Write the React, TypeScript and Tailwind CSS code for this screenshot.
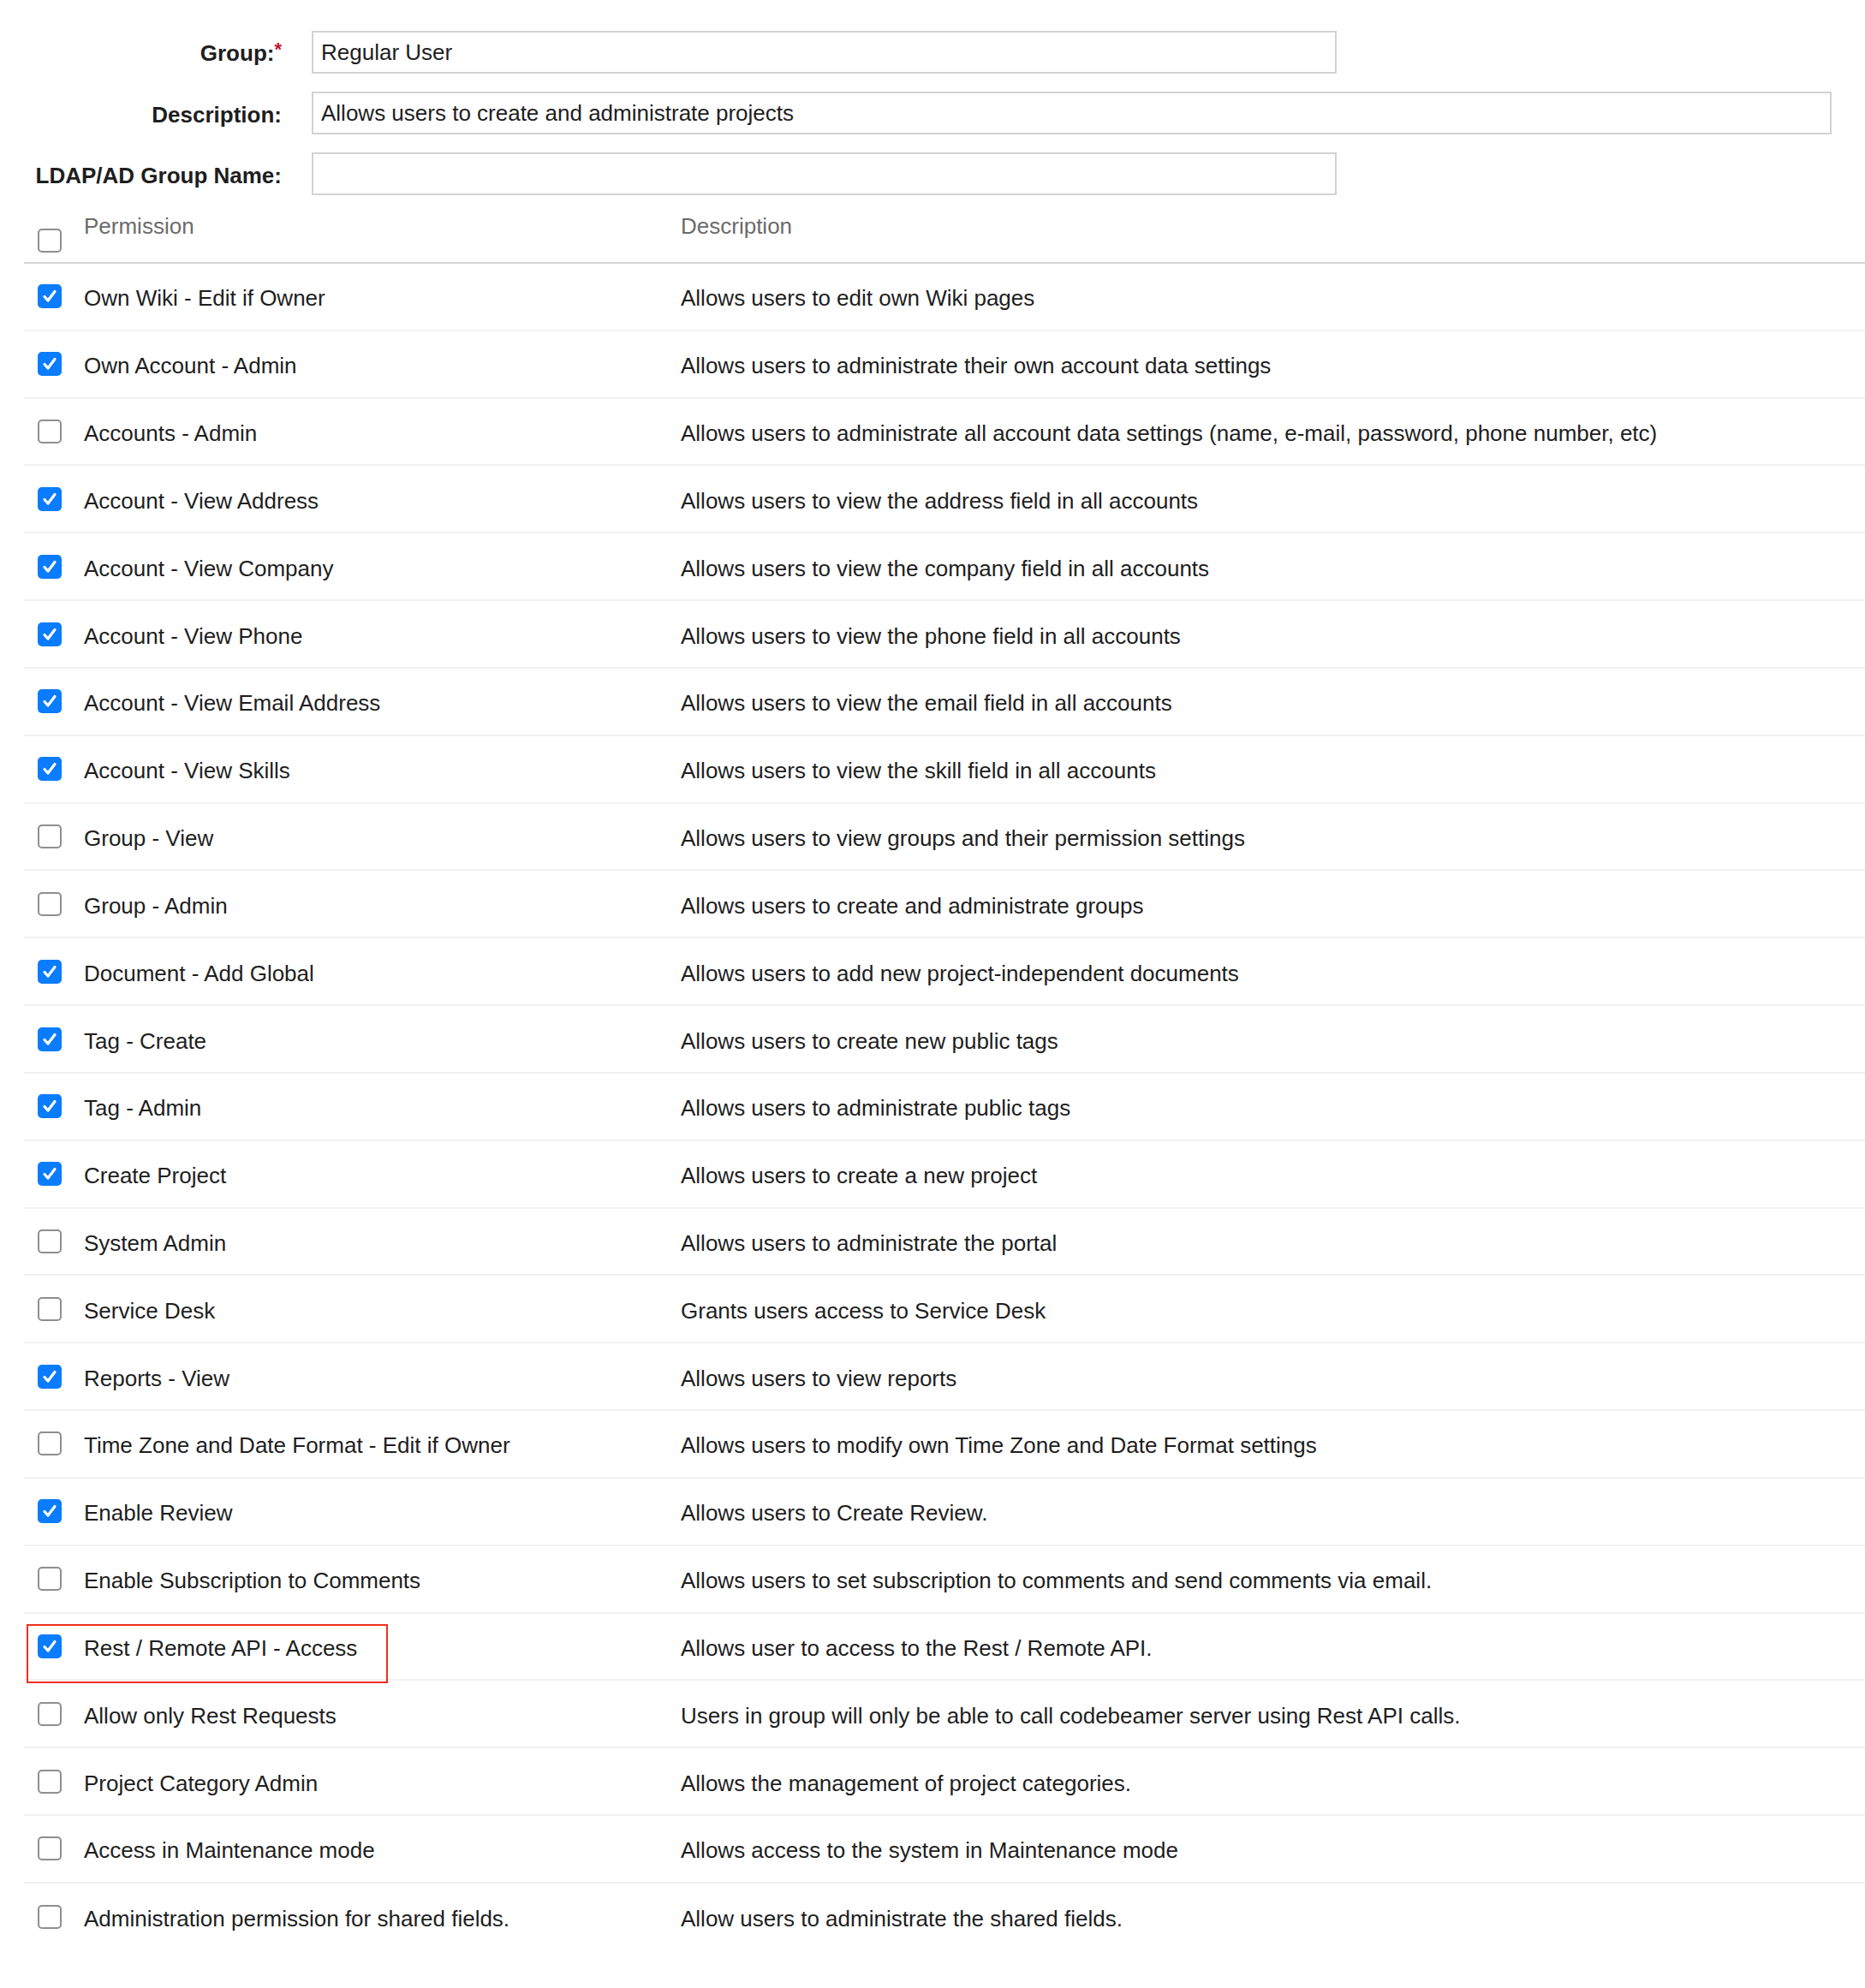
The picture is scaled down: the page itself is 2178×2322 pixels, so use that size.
import React from "react";

type Perm = { name: string; desc: string; checked: boolean; highlight?: boolean };

const perms: Perm[] = [
  { name: "Own Wiki - Edit if Owner", desc: "Allows users to edit own Wiki pages", checked: true },
  { name: "Own Account - Admin", desc: "Allows users to administrate their own account data settings", checked: true },
  { name: "Accounts - Admin", desc: "Allows users to administrate all account data settings (name, e-mail, password, phone number, etc)", checked: false },
  { name: "Account - View Address", desc: "Allows users to view the address field in all accounts", checked: true },
  { name: "Account - View Company", desc: "Allows users to view the company field in all accounts", checked: true },
  { name: "Account - View Phone", desc: "Allows users to view the phone field in all accounts", checked: true },
  { name: "Account - View Email Address", desc: "Allows users to view the email field in all accounts", checked: true },
  { name: "Account - View Skills", desc: "Allows users to view the skill field in all accounts", checked: true },
  { name: "Group - View", desc: "Allows users to view groups and their permission settings", checked: false },
  { name: "Group - Admin", desc: "Allows users to create and administrate groups", checked: false },
  { name: "Document - Add Global", desc: "Allows users to add new project-independent documents", checked: true },
  { name: "Tag - Create", desc: "Allows users to create new public tags", checked: true },
  { name: "Tag - Admin", desc: "Allows users to administrate public tags", checked: true },
  { name: "Create Project", desc: "Allows users to create a new project", checked: true },
  { name: "System Admin", desc: "Allows users to administrate the portal", checked: false },
  { name: "Service Desk", desc: "Grants users access to Service Desk", checked: false },
  { name: "Reports - View", desc: "Allows users to view reports", checked: true },
  { name: "Time Zone and Date Format - Edit if Owner", desc: "Allows users to modify own Time Zone and Date Format settings", checked: false },
  { name: "Enable Review", desc: "Allows users to Create Review.", checked: true },
  { name: "Enable Subscription to Comments", desc: "Allows users to set subscription to comments and send comments via email.", checked: false },
  { name: "Rest / Remote API - Access", desc: "Allows user to access to the Rest / Remote API.", checked: true, highlight: true },
  { name: "Allow only Rest Requests", desc: "Users in group will only be able to call codebeamer server using Rest API calls.", checked: false },
  { name: "Project Category Admin", desc: "Allows the management of project categories.", checked: false },
  { name: "Access in Maintenance mode", desc: "Allows access to the system in Maintenance mode", checked: false },
  { name: "Administration permission for shared fields.", desc: "Allow users to administrate the shared fields.", checked: false },
];

const Checkbox = ({ checked }: { checked: boolean }) =>
  checked ? (
    <div className="w-[28px] h-[28px] rounded-[5px] bg-[#0a7cff] flex items-center justify-center">
      <svg width="20" height="20" viewBox="0 0 20 20" fill="none">
        <path d="M4 10.5 L8 15 L16 4.5" stroke="white" strokeWidth="3.2" strokeLinecap="round" strokeLinejoin="round" />
      </svg>
    </div>
  ) : (
    <div className="w-[28px] h-[28px] rounded-[5px] border-2 border-[#8e8e93] bg-white" />
  );

const Field = ({ label, value, width, required }: { label: string; value: string; width: string; required?: boolean }) => (
  <>
    <div className="text-right font-bold self-center pt-[3px]">
      {label}
      {required && <span className="text-[#c8102e] relative -top-[6px] text-[22px]">*</span>}
    </div>
    <div className={`${width} h-[50px] border-2 border-[#d2d2d2] pl-[9px] flex items-center`}>{value}</div>
  </>
);

const App = () => {
  return (
    <div className="w-[2178px] h-[2322px] bg-white text-[26px] leading-[30px] text-[#1e1e1e] font-['Liberation_Sans',Arial,sans-serif] overflow-hidden">
      <div className="grid grid-cols-[329px_1fr] gap-x-[35px] gap-y-[21px] pt-[36px]">
        <Field label="Group:" value="Regular User" width="w-[1197px]" required />
        <Field label="Description:" value="Allows users to create and administrate projects" width="w-[1775px]" />
        <Field label="LDAP/AD Group Name:" value="" width="w-[1197px]" />
      </div>
      <div className="ml-[28px] mt-[21px]">
        <div className="flex h-[59px] border-b-2 border-[#d4d4d4] text-[#6b6b6b]">
          <div className="w-[70px] pl-[16px] pt-[18px]">
            <Checkbox checked={false} />
          </div>
          <div className="w-[697px]">Permission</div>
          <div>Description</div>
        </div>
        {perms.map((p, i) => (
          <div
            key={i}
            className="relative flex items-center h-[78.84px] border-b-2 border-[#f1f1f1] last:border-b-0"
          >
            <div className="w-[70px] pl-[16px]">
              <Checkbox checked={p.checked} />
            </div>
            <div className="w-[697px] pt-[4px]">{p.name}</div>
            <div className="pt-[4px]">{p.desc}</div>
            {p.highlight && (
              <div className="absolute left-[3px] top-[12px] w-[422px] h-[69px] border-2 border-[#f0301e]" />
            )}
          </div>
        ))}
      </div>
    </div>
  );
};

export default App;
